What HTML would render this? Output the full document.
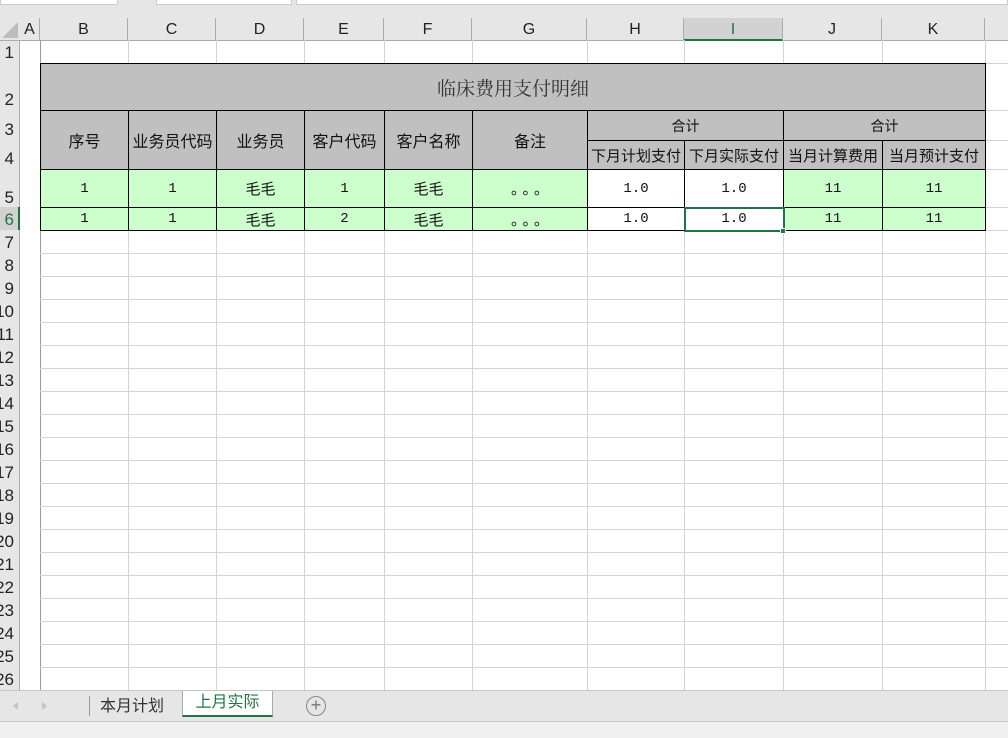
<!DOCTYPE html>
<html><head><meta charset="utf-8"><style>
*{margin:0;padding:0;box-sizing:border-box}
body{width:1008px;height:738px;overflow:hidden;background:#fff;position:relative;font-family:"Liberation Sans","Noto Sans CJK SC",sans-serif}
.a{position:absolute}
.vl{position:absolute;top:40px;height:650px;width:1px;background:#d4d4d4}
.hl{position:absolute;left:40px;width:968px;height:1px;background:#d4d4d4}
.ch{position:absolute;top:18px;height:22px;border-right:1px solid #ababab;text-align:center;font-size:16px;line-height:24px;color:#222}
.rn{position:absolute;left:-14px;width:28px;text-align:right;font-size:17px;color:#222;overflow:hidden}
table{position:absolute;left:40px;top:63px;border-collapse:collapse;table-layout:fixed;font-family:"Liberation Sans","Noto Sans CJK SC",sans-serif}
td{border:1px solid #000;text-align:center;font-size:15px;color:#111;padding:0;overflow:hidden;white-space:nowrap}
.g{background:#c0c0c0}.gr{background:#ccffcc}.w{background:#fff}
.m{font-family:"Liberation Mono","Noto Sans CJK SC",monospace;font-size:14px}
.h{font-size:16px}
.dt{letter-spacing:4px;padding-left:4px}
</style></head><body>
<div class="a" style="left:0;top:0;width:1008px;height:18px;background:#e6e6e6"></div>
<div class="a" style="left:0;top:0;width:118px;height:5px;background:#fff;border:1px solid #ccc;border-top:0"></div>
<div class="a" style="left:156px;top:0;width:136px;height:5px;background:#fff;border:1px solid #ccc;border-top:0"></div>
<div class="a" style="left:296px;top:0;width:712px;height:5px;background:#fff;border:1px solid #ccc;border-top:0"></div>
<div class="a" style="left:0;top:18px;width:1008px;height:23px;background:#e6e6e6;border-bottom:1px solid #ababab"></div>
<div class="a" style="left:0;top:18px;width:0;height:0;border-left:16px solid transparent;border-bottom:16px solid #bdbdbd;margin:4px 0 0 2px"></div>
<div class="ch" style="left:20px;width:20px">A</div>
<div class="ch" style="left:40px;width:88px">B</div>
<div class="ch" style="left:128px;width:88px">C</div>
<div class="ch" style="left:216px;width:88px">D</div>
<div class="ch" style="left:304px;width:80px">E</div>
<div class="ch" style="left:384px;width:88px">F</div>
<div class="ch" style="left:472px;width:115px">G</div>
<div class="ch" style="left:587px;width:97px">H</div>
<div class="ch" style="left:684px;width:99px;background:#d2d2d2;border-bottom:2px solid #217346;height:23px;color:#217346">I</div>
<div class="ch" style="left:783px;width:99px">J</div>
<div class="ch" style="left:882px;width:103px">K</div>
<div class="a" style="left:0;top:41px;width:20px;height:649px;background:#e6e6e6;border-right:1px solid #ababab"></div>
<div class="a" style="left:0;top:207px;width:20px;height:23px;background:#d2d2d2;border-right:2px solid #217346"></div>
<div class="vl" style="left:40px;background:#9b9b9b"></div>
<div class="vl" style="left:128px"></div><div class="vl" style="left:216px"></div><div class="vl" style="left:304px"></div><div class="vl" style="left:384px"></div><div class="vl" style="left:472px"></div><div class="vl" style="left:587px"></div><div class="vl" style="left:684px"></div><div class="vl" style="left:783px"></div><div class="vl" style="left:882px"></div><div class="vl" style="left:985px"></div>
<div class="hl" style="top:63px"></div><div class="hl" style="top:110px"></div><div class="hl" style="top:140px"></div><div class="hl" style="top:169px"></div><div class="hl" style="top:207px"></div><div class="hl" style="top:230px"></div>
<div class="hl" style="top:253px"></div><div class="hl" style="top:276px"></div><div class="hl" style="top:299px"></div><div class="hl" style="top:322px"></div><div class="hl" style="top:345px"></div><div class="hl" style="top:368px"></div><div class="hl" style="top:391px"></div><div class="hl" style="top:414px"></div><div class="hl" style="top:437px"></div><div class="hl" style="top:460px"></div><div class="hl" style="top:483px"></div><div class="hl" style="top:506px"></div><div class="hl" style="top:529px"></div><div class="hl" style="top:552px"></div><div class="hl" style="top:575px"></div><div class="hl" style="top:598px"></div><div class="hl" style="top:621px"></div><div class="hl" style="top:644px"></div><div class="hl" style="top:667px"></div>
<div class="rn" style="top:43px">1</div><div class="rn" style="top:90px">2</div><div class="rn" style="top:120px">3</div><div class="rn" style="top:149px">4</div><div class="rn" style="top:188px">5</div><div class="rn" style="top:210px;color:#217346">6</div>
<div class="rn" style="top:233px">7</div><div class="rn" style="top:256px">8</div><div class="rn" style="top:279px">9</div><div class="rn" style="top:302px">10</div><div class="rn" style="top:325px">11</div><div class="rn" style="top:348px">12</div><div class="rn" style="top:371px">13</div><div class="rn" style="top:394px">14</div><div class="rn" style="top:417px">15</div><div class="rn" style="top:440px">16</div><div class="rn" style="top:463px">17</div><div class="rn" style="top:486px">18</div><div class="rn" style="top:509px">19</div><div class="rn" style="top:532px">20</div><div class="rn" style="top:555px">21</div><div class="rn" style="top:578px">22</div><div class="rn" style="top:601px">23</div><div class="rn" style="top:624px">24</div><div class="rn" style="top:647px">25</div><div class="rn" style="top:670px">26</div>
<table>
<colgroup><col style="width:88px"><col style="width:88px"><col style="width:88px"><col style="width:80px"><col style="width:88px"><col style="width:115px"><col style="width:97px"><col style="width:99px"><col style="width:99px"><col style="width:103px"></colgroup>
<tr style="height:47px"><td class="g" colspan="10" style="font-family:'Liberation Serif','Noto Serif CJK SC',serif;font-size:19px;color:#333">临床费用支付明细</td></tr>
<tr style="height:30px"><td class="g h" rowspan="2">序号</td><td class="g h" rowspan="2">业务员代码</td><td class="g h" rowspan="2">业务员</td><td class="g h" rowspan="2">客户代码</td><td class="g h" rowspan="2">客户名称</td><td class="g h" rowspan="2">备注</td><td class="g" colspan="2" style="font-size:14px">合计</td><td class="g" colspan="2" style="font-size:14px">合计</td></tr>
<tr style="height:29px"><td class="g">下月计划支付</td><td class="g">下月实际支付</td><td class="g">当月计算费用</td><td class="g">当月预计支付</td></tr>
<tr style="height:38px"><td class="gr m">1</td><td class="gr m">1</td><td class="gr">毛毛</td><td class="gr m">1</td><td class="gr">毛毛</td><td class="gr dt">。。。</td><td class="w m">1.0</td><td class="w m">1.0</td><td class="gr m">11</td><td class="gr m">11</td></tr>
<tr style="height:23px"><td class="gr m">1</td><td class="gr m">1</td><td class="gr">毛毛</td><td class="gr m">2</td><td class="gr">毛毛</td><td class="gr dt">。。。</td><td class="w m">1.0</td><td class="w m" style="outline:2px solid #217346;outline-offset:-1px">1.0</td><td class="gr m">11</td><td class="gr m">11</td></tr>
</table>
<div class="a" style="left:780px;top:228px;width:6px;height:6px;background:#217346;border:1px solid #fff"></div>
<div class="a" style="left:0;top:690px;width:1008px;height:32px;background:#e6e6e6;border-top:1px solid #c6c6c6;border-bottom:1px solid #c6c6c6"></div>
<div class="a" style="left:13px;top:702px;width:0;height:0;border-top:4px solid transparent;border-bottom:4px solid transparent;border-right:5px solid #c4c4c4"></div>
<div class="a" style="left:42px;top:702px;width:0;height:0;border-top:4px solid transparent;border-bottom:4px solid transparent;border-left:5px solid #c4c4c4"></div>
<div class="a" style="left:89px;top:696px;width:1px;height:20px;background:#999"></div>
<div class="a" style="left:100px;top:692px;font-size:16px;color:#333">本月计划</div>
<div class="a" style="left:182px;top:691px;width:91px;height:26px;background:#fff;border-bottom:2px solid #217346;border-right:1px solid #aaa;border-left:1px solid #aaa;text-align:center;font-size:16px;color:#217346;line-height:24px">上月实际</div>
<div class="a" style="left:306px;top:696px;width:20px;height:20px;border:1.5px solid #888;border-radius:50%;text-align:center;line-height:16px;font-size:18px;color:#777">+</div>
<div class="a" style="left:0;top:722px;width:1008px;height:16px;background:#f0f0f0"></div>
</body></html>
